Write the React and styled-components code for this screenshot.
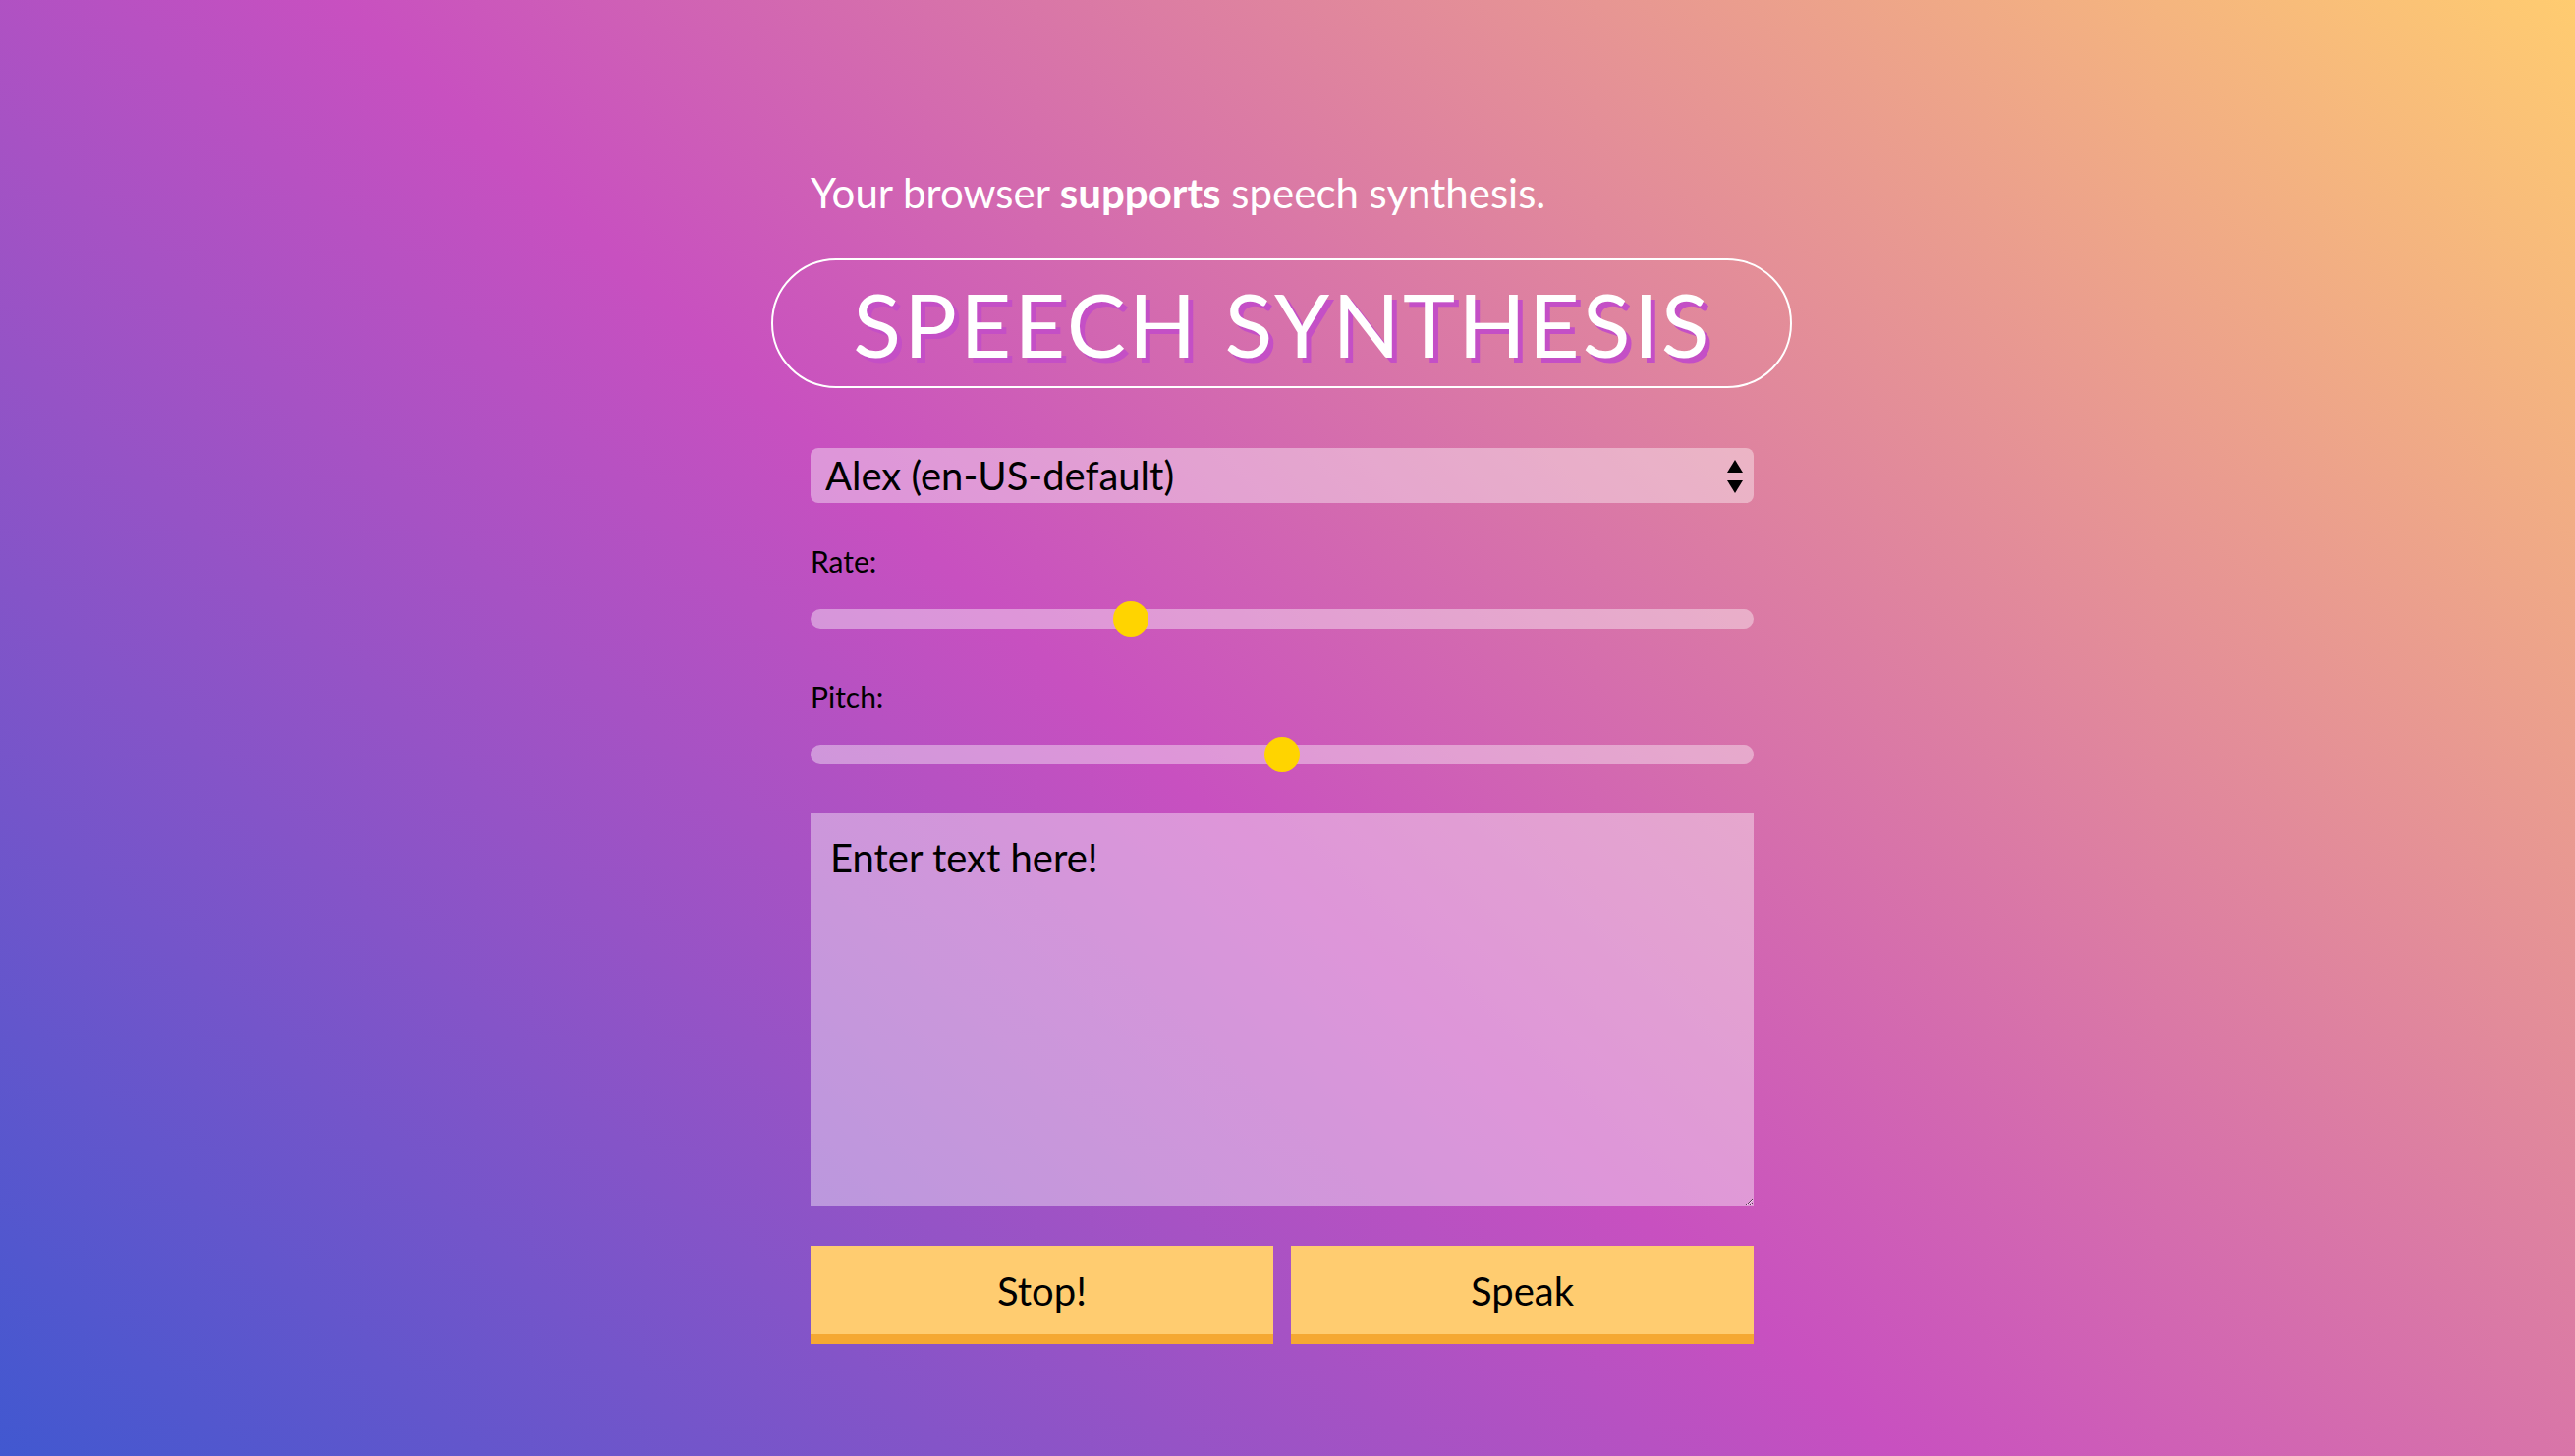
import React, { useState } from "react";
import styled, { createGlobalStyle } from "styled-components";

const GlobalStyle = createGlobalStyle`
  html, body {
    margin: 0;
    padding: 0;
    height: 100%;
  }
  body {
    font-family: Lato, "Open Sans", sans-serif;
    background-image: linear-gradient(43deg, #4158D0 0%, #C850C0 46%, #FFCC70 100%);
    background-attachment: fixed;
    min-height: 100vh;
    overflow: hidden;
  }
`;

const Page = styled.div`
  display: flex;
  justify-content: center;
  padding: 171px 11px 0 0;
  min-height: 100vh;
  box-sizing: border-box;
`;

const Panel = styled.div`
  width: 960px;
  display: flex;
  flex-direction: column;
`;

const Notice = styled.p`
  margin: 0;
  font-size: 42px;
  line-height: 50px;
  color: #ffffff;
  font-weight: 400;
  strong { font-weight: 700; }
`;

const Title = styled.h1`
  margin: 42px -39px 0 -40px;
  height: 132px;
  box-sizing: border-box;
  border: 2px solid #ffffff;
  border-radius: 66px;
  display: flex;
  align-items: center;
  justify-content: center;
  font-size: 90px;
  font-weight: 400;
  letter-spacing: 3px;
  color: #ffffff;
  text-shadow: 5px 5px 0 #c44fc6;
  padding-left: 2px;
`;

const SelectWrap = styled.div`
  position: relative;
  margin-top: 61px;
`;

const Select = styled.select`
  appearance: none;
  width: 100%;
  height: 56px;
  border: 0;
  border-radius: 8px;
  padding: 0 15px;
  font-family: inherit;
  font-size: 40px;
  color: #000;
  background: rgba(255, 255, 255, 0.4);
  outline: 0;
`;

const Arrows = styled.svg`
  position: absolute;
  right: 9px;
  top: 11px;
  pointer-events: none;
`;

const Label = styled.label`
  display: block;
  margin-top: ${(p) => p.$top}px;
  font-size: 30px;
  line-height: 34px;
  color: #000;
`;

const Range = styled.input`
  appearance: none;
  -webkit-appearance: none;
  width: 100%;
  height: 36px;
  margin: 24px 0 0;
  padding: 0;
  background: transparent;
  outline: 0;
  &::-webkit-slider-runnable-track {
    height: 20px;
    border-radius: 10px;
    background: rgba(255, 255, 255, 0.4);
  }
  &::-webkit-slider-thumb {
    -webkit-appearance: none;
    width: 36px;
    height: 36px;
    border-radius: 50%;
    background: #ffd400;
    margin-top: -8px;
    border: 0;
  }
`;

const TextArea = styled.textarea`
  display: block;
  width: 100%;
  height: 400px;
  margin-top: 42px;
  box-sizing: border-box;
  border: 0;
  padding: 21px 20px;
  font-family: inherit;
  font-size: 40px;
  color: #000;
  background: rgba(255, 255, 255, 0.4);
  outline: 0;
`;

const Buttons = styled.div`
  display: grid;
  grid-template-columns: 1fr 1fr;
  gap: 18px;
  margin-top: 40px;
`;

const Button = styled.button`
  height: 100px;
  border: 0;
  border-bottom: 10px solid #f5a832;
  background: #ffcc70;
  font-family: inherit;
  font-size: 40px;
  color: #000;
  padding: 2px 0 0;
  cursor: pointer;
`;

export default function App() {
  const [rate, setRate] = useState(1);
  const [pitch, setPitch] = useState(1);
  const [text, setText] = useState("Enter text here!");
  return (
    <>
      <GlobalStyle />
      <Page>
        <Panel>
          <Notice>
            Your browser <strong>supports</strong> speech synthesis.
          </Notice>
          <Title>SPEECH SYNTHESIS</Title>
          <SelectWrap>
            <Select defaultValue="alex">
              <option value="alex">Alex (en-US-default)</option>
            </Select>
            <Arrows width="20" height="36" viewBox="0 0 20 36">
              <path d="M10 1 L18 14 L2 14 Z" fill="#000" />
              <path d="M2 22 L18 22 L10 35 Z" fill="#000" />
            </Arrows>
          </SelectWrap>
          <Label $top={42} htmlFor="rate">Rate:</Label>
          <Range
            id="rate"
            type="range"
            min="0.5"
            max="2"
            step="0.1"
            value={rate}
            onChange={(e) => setRate(e.target.value)}
          />
          <Label $top={44} htmlFor="pitch">Pitch:</Label>
          <Range
            id="pitch"
            type="range"
            min="0"
            max="2"
            step="0.1"
            value={pitch}
            onChange={(e) => setPitch(e.target.value)}
          />
          <TextArea value={text} onChange={(e) => setText(e.target.value)} />
          <Buttons>
            <Button>Stop!</Button>
            <Button>Speak</Button>
          </Buttons>
        </Panel>
      </Page>
    </>
  );
}
